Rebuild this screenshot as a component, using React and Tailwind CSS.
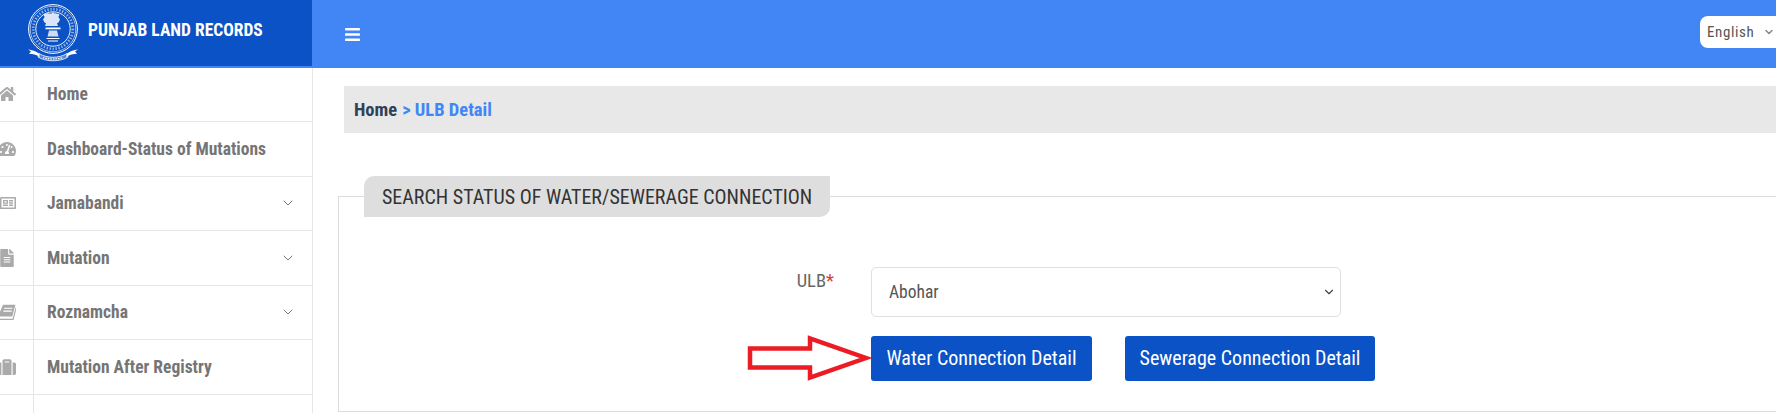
import { FaHome, FaTachometerAlt, FaRegNewspaper, FaFileAlt, FaSuitcase, FaBars } from 'react-icons/fa';
import { ChevronDown } from 'lucide-react';

// slanted closed book, the icon pack's own one stands upright
const SlantBook = ({ size, className }) => (
  <svg width={size} height={size} viewBox="0 0 16 16" className={className} fill="currentColor">
    <path d="M4.500 1.500h11l-2.800 10.500h-10.200c-.8 0-1.300.4-1.300 1s.5 1 1.300 1h10.500l3-11 .8.700-3 11.300h-11.500c-1.500 0-2.500-.9-2.500-2.200 0-.4.100-.8.200-1.100z" />
    <path d="M5.500 4.200h7.500l-.3 1h-7.500zM4.900 6.700h7.500l-.3 1h-7.500z" fill="white" />
  </svg>
);

const MENU = [
  { label: 'Home', icon: FaHome },
  { label: 'Dashboard-Status of Mutations', icon: FaTachometerAlt },
  { label: 'Jamabandi', icon: FaRegNewspaper, sub: true },
  { label: 'Mutation', icon: FaFileAlt, sub: true },
  { label: 'Roznamcha', icon: SlantBook, sub: true },
  { label: 'Mutation After Registry', icon: FaSuitcase },
];

const Emblem = () => (
  <svg width="52" height="58" viewBox="0 0 52 58" fill="none" stroke="white">
    <circle cx="26" cy="25" r="24.400" strokeWidth="1" />
    <circle cx="26" cy="25" r="22.800" strokeWidth="0.6" />
    <circle cx="26" cy="25" r="19.800" strokeWidth="2.800" strokeDasharray="1.400 1.600" opacity="0.55" />
    <circle cx="26" cy="25" r="17.200" strokeWidth="0.9" />
    {/* lion capital */}
    <path d="M24.500 9.500l1.500-1.500 1.500 1.500c1-.5 2-.3 2.500.5 1-.4 2 0 2.400 1l-1 2 1.600 2.500-1.500 3-1.500.8 1 2.700h-13l1-2.700-1.500-.8-1.500-3 1.600-2.500-1-2c.4-1 1.400-1.400 2.400-1 .5-.8 1.500-1 2.500-.5z" fill="white" fillOpacity="0.85" stroke="none" />
    <path d="M18.500 23.500h15v1.800h-15z" fill="white" stroke="none" />
    <path d="M22 26.500h8l1.500 6h-11z" fill="white" fillOpacity="0.8" stroke="none" />
    <path d="M19.500 34.500h13M21 37h10" strokeWidth="1" />
    {/* ribbon */}
    <path d="M1 45.500c4 .5 8 1.500 11 4l1 3.500c-4-2.500-7-3-11-3.200l2-2.200z" fill="white" stroke="none" />
    <path d="M51 45.500c-4 .5-8 1.500-11 4l-1 3.500c4-2.500 7-3 11-3.200l-2-2.200z" fill="white" stroke="none" />
    <path d="M12 49.500c8 5 20 5 28 0l1 3.500c-8 5-22 5-30 0z" fill="white" fillOpacity="0.3" strokeWidth="0.8" />
    <path d="M16 53.500c6 2 14 2 20 0" strokeWidth="1.200" strokeDasharray="1.500 1" />
  </svg>
);

const Arrow = () => (
  <svg width="125" height="46" viewBox="0 0 125 46" className="shrink-0">
    <path d="M3 13.500h60v-10l56 19.500-56 19.500v-10h-60z" fill="white" stroke="#ec1c24" strokeWidth="4.500" />
  </svg>
);

export default function App() {
  return (
    <div className="h-[413px] w-[1776px] overflow-hidden bg-white font-['Roboto_Condensed','Roboto',sans-serif] [font-stretch:75%]">
      <header className="flex h-[68px] bg-[#4285f4]">
        <div className="flex h-[66px] w-[312px] items-center gap-[9px] bg-[#0a52c6] pl-[27px]">
          <Emblem />
          <span className="-mt-[6px] text-[17.500px] font-bold text-white">PUNJAB LAND RECORDS</span>
        </div>
        <div className="flex flex-1 items-center justify-between pl-[32px]">
          <FaBars className="text-white" size={17} />
          <div className="-mt-[4px] -mr-[4px] flex h-[32px] w-[80px] items-center gap-[9px] rounded-l-[8px] bg-white pl-[7px] text-[15px] tracking-[0.6px] text-[#555]">
            English
            <ChevronDown size={12} strokeWidth={3} className="text-[#888]" />
          </div>
        </div>
      </header>

      <div className="flex">
        <aside className="-mt-[0.5px] h-[346px] w-[313px] shrink-0 border-r border-[#e6e6e6]">
          {MENU.map((item) => {
            const Icon = item.icon;
            return (
              <div key={item.label} className="flex h-[54.500px] items-center border-b border-[#e6e6e6] pr-[16px]">
                <div className="flex h-full w-[34px] shrink-0 items-center border-r border-[#e6e6e6]">
                  <Icon size={18} className="-ml-[2px] text-[#aaa]" />
                </div>
                <span className="flex-1 pl-[13px] text-[17.500px] font-bold text-[#757575]">{item.label}</span>
                {item.sub && <ChevronDown size={16} strokeWidth={1.500} className="text-[#777]" />}
              </div>
            );
          })}
          <div className="h-[20px] w-[34px] border-r border-[#e6e6e6]" />
        </aside>

        <main className="min-w-0 flex-1 overflow-hidden pt-[18px]">
          <div className="ml-[31px] flex h-[47px] items-center bg-[#e8e8e8] pt-[2px] pl-[10px] text-[18.500px] font-bold">
            <span className="text-[#2f4159]">Home</span>
            <span className="ml-[5px] text-[#4285f4]">&gt; ULB Detail</span>
          </div>

          <fieldset className="mt-[43px] -mr-[4px] ml-[25px] h-[236px] border border-[#dcdcdc]">
            <legend className="ml-[25px] h-[41px] w-[466px] rounded-tl-[10px] rounded-br-[10px] bg-[#dedede] pl-[18px] text-[20px] leading-[43px] text-[#333]">
              SEARCH STATUS OF WATER/SEWERAGE CONNECTION
            </legend>

            <div className="mt-[50px] flex pl-[408px]">
              <div className="flex w-[124px] justify-end pr-[37px] pt-[1px] text-[18.500px] text-[#666]">
                ULB<span className="text-[#d9402f]">*</span>
              </div>
              <div className="relative">
                <select className="h-[50px] w-[470px] appearance-none rounded-[5px] border border-[#dfdfdf] bg-white pl-[17px] text-[17.500px] text-[#555]">
                  <option>Abohar</option>
                </select>
                <ChevronDown size={14} strokeWidth={2} className="absolute top-[18px] right-[5px] text-[#444]" />
              </div>
            </div>

            <div className="mt-[18px] flex items-center pl-[408px]">
              <Arrow />
              <button className="-ml-px h-[45px] w-[221px] rounded-[3px] bg-[#0a52c6] text-[20px] text-white">
                Water Connection Detail
              </button>
              <button className="ml-[33px] h-[45px] w-[250px] rounded-[3px] bg-[#0a52c6] text-[20px] text-white">
                Sewerage Connection Detail
              </button>
            </div>
          </fieldset>
        </main>
      </div>
    </div>
  );
}
